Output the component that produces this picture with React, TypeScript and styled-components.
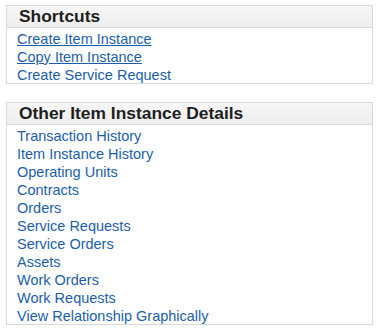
import React from "react";
import styled, { createGlobalStyle } from "styled-components";

const Global = createGlobalStyle`
  html, body { margin: 0; padding: 0; background: #ffffff; }
  body { font-family: "Liberation Sans", Arial, sans-serif; }
`;

const Page = styled.div`
  display: flex;
  flex-direction: column;
  gap: 18px;
  padding: 5px 0 0 6px;
  width: 367px;
`;

const Box = styled.section`
  border: 1px solid #d9d9d9;
  background: #ffffff;
`;

const Header = styled.h2`
  margin: 0;
  height: 21px;
  padding-left: 12px;
  background: linear-gradient(#f6f6f6, #eeeeee);
  border-bottom: 1px solid #dadada;
  font-size: 17.4px;
  font-weight: bold;
  line-height: 21px;
  color: #1e1e1e;
`;

const List = styled.ul`
  list-style: none;
  margin: 0;
  padding: 1px 0 0 10px;
`;

const Item = styled.li`
  height: 18px;
  line-height: 20px;
  font-size: 14.5px;
`;

const Link = styled.a<{ $underline?: boolean }>`
  color: #1c5ea8;
  text-decoration: ${(p) => (p.$underline ? "underline" : "none")};
  cursor: pointer;
`;

const shortcuts = [
  { label: "Create Item Instance", u: true },
  { label: "Copy Item Instance", u: true },
  { label: "Create Service Request", u: false },
];

const details = [
  "Transaction History",
  "Item Instance History",
  "Operating Units",
  "Contracts",
  "Orders",
  "Service Requests",
  "Service Orders",
  "Assets",
  "Work Orders",
  "Work Requests",
  "View Relationship Graphically",
];

export default function App() {
  return (
    <>
      <Global />
      <Page>
        <Box>
          <Header>Shortcuts</Header>
          <List>
            {shortcuts.map((s) => (
              <Item key={s.label}>
                <Link $underline={s.u}>{s.label}</Link>
              </Item>
            ))}
          </List>
        </Box>
        <Box>
          <Header>Other Item Instance Details</Header>
          <List>
            {details.map((d) => (
              <Item key={d}>
                <Link>{d}</Link>
              </Item>
            ))}
          </List>
        </Box>
      </Page>
    </>
  );
}
